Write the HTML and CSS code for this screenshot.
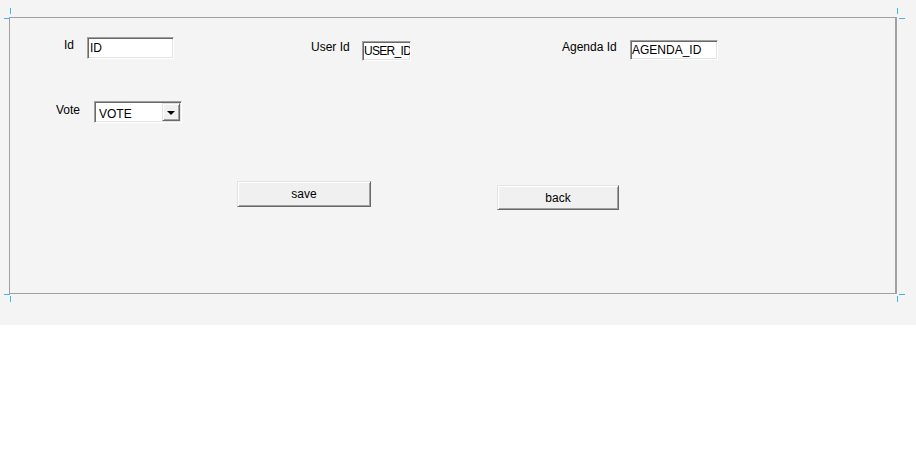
FILE: index.html
```html
<!DOCTYPE html>
<html lang="en">
<head>
  <meta charset="UTF-8">
  <meta name="viewport" content="width=device-width, initial-scale=1.0">
  <title>Vote Form</title>
  <link rel="stylesheet" href="styles.css">
</head>
<body>

  <div class="page">
    <span class="tick tick-v tl-v"></span>
    <span class="tick tick-h tl-h"></span>
    <span class="tick tick-v tr-v"></span>
    <span class="tick tick-h tr-h"></span>
    <span class="tick tick-v bl-v"></span>
    <span class="tick tick-h bl-h"></span>
    <span class="tick tick-v br-v"></span>
    <span class="tick tick-h br-h"></span>

    <form class="frame" onsubmit="return false;">
      <div class="row row-ids">
        <label class="lbl lbl-id" for="id">Id</label>
        <input class="field field-id" type="text" id="id" value="ID">

        <label class="lbl lbl-user" for="userId">User Id</label>
        <input class="field field-user" type="text" id="userId" value="USER_ID">

        <label class="lbl lbl-agenda" for="agendaId">Agenda Id</label>
        <input class="field field-agenda" type="text" id="agendaId" value="AGENDA_ID">
      </div>

      <div class="row row-vote">
        <label class="lbl lbl-vote">Vote</label>
        <div class="combo">
          <span class="combo-text">VOTE</span>
          <span class="combo-btn"><span class="arrow"></span></span>
        </div>
      </div>

      <div class="row row-buttons">
        <button type="button" class="btn btn-save">save</button>
        <button type="button" class="btn btn-back">back</button>
      </div>
    </form>
  </div>

</body>
</html>
```

FILE: styles.css
```css
body {
  margin: 0;
  background-color: #ffffff;
  font-family: "Liberation Sans", Arial, sans-serif;
  font-size: 12px;
  color: #000;
}

.page {
  position: relative;
  height: 325px;
  padding: 17px 0 0 9px;
  box-sizing: border-box;
  background-color: #f4f4f4;
}

.frame {
  width: 888px;
  height: 277px;
  box-sizing: border-box;
  border: 1px solid #a0a0a0;
  border-right-width: 2px;
  margin: 0;
}

/* designer corner markers */
.tick {
  position: absolute;
  background-color: #3db6ea;
}

.tick-v { width: 1px; height: 6px; }
.tick-h { width: 6px; height: 1px; }

.tl-v { left: 10px; top: 8px; }
.tl-h { left: 4px; top: 18px; }
.tr-v { left: 897px; top: 8px; }
.tr-h { left: 899px; top: 18px; }
.bl-v { left: 10px; top: 296px; }
.bl-h { left: 4px; top: 294px; }
.br-v { left: 897px; top: 296px; }
.br-h { left: 899px; top: 294px; }

.row {
  display: flex;
  align-items: flex-start;
}

.lbl {
  display: block;
  flex: none;
  line-height: 14px;
  white-space: nowrap;
}

.field {
  flex: none;
  box-sizing: border-box;
  margin: 0;
  padding: 0 1px;
  font-family: "Liberation Sans", Arial, sans-serif;
  font-size: 12px;
  color: #000;
  background-color: #fff;
  border: 1px solid;
  border-color: #a0a0a0 #ffffff #ffffff #a0a0a0;
  box-shadow: inset 1px 1px 0 #696969, inset -1px -1px 0 #e3e3e3;
  outline: none;
}

.row-ids { margin-top: 19px; }

.lbl-id { margin: 1px 0 0 54px; width: 23px; }
.field-id { width: 87px; height: 22px; padding-left: 2px; }

.lbl-user { margin: 3px 0 0 137px; width: 51px; }
.field-user { width: 49px; height: 20px; margin-top: 4px; padding: 0 0 0 1px; letter-spacing: -0.7px; }

.lbl-agenda { margin: 3px 0 0 151px; width: 68px; }
.field-agenda { width: 88px; height: 20px; margin-top: 3px; }

.row-vote { margin-top: 40px; }

.lbl-vote { margin: 2px 0 0 46px; width: 38px; }

.combo {
  display: flex;
  flex: none;
  box-sizing: border-box;
  width: 88px;
  height: 22px;
  background-color: #fff;
  border: 1px solid;
  border-color: #a0a0a0 #ffffff #ffffff #a0a0a0;
  box-shadow: inset 1px 1px 0 #696969, inset -1px -1px 0 #e3e3e3;
  padding: 1px;
}

.combo-text {
  flex: 1;
  padding: 4px 0 0 3px;
  line-height: 14px;
}

.combo-btn {
  display: flex;
  align-items: center;
  justify-content: center;
  box-sizing: border-box;
  width: 18px;
  background-color: #f0f0f0;
  border: 1px solid;
  border-color: #e3e3e3 #696969 #696969 #e3e3e3;
  box-shadow: inset 1px 1px 0 #fff, inset -1px -1px 0 #a0a0a0;
}

.arrow {
  width: 0;
  height: 0;
  border-left: 4px solid transparent;
  border-right: 4px solid transparent;
  border-top: 4px solid #000;
  margin-top: 1px;
}

.row-buttons { margin-top: 58px; }

.btn {
  flex: none;
  box-sizing: border-box;
  margin: 0;
  padding: 0;
  font-family: "Liberation Sans", Arial, sans-serif;
  font-size: 12px;
  color: #000;
  background-color: #f0f0f0;
  border: 1px solid;
  border-color: #e3e3e3 #696969 #696969 #e3e3e3;
  box-shadow: inset 1px 1px 0 #fff, inset -1px -1px 0 #a0a0a0;
  cursor: pointer;
}

.btn-save { margin-left: 227px; width: 134px; height: 26px; }
.btn-back { margin: 4px 0 0 126px; width: 122px; height: 25px; }
```
